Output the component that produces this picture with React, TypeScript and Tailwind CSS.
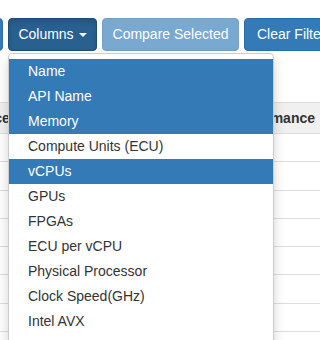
import React from 'react'

const items = [
  { label: 'Name', on: true },
  { label: 'API Name', on: true },
  { label: 'Memory', on: true },
  { label: 'Compute Units (ECU)', on: false },
  { label: 'vCPUs', on: true },
  { label: 'GPUs', on: false },
  { label: 'FPGAs', on: false },
  { label: 'ECU per vCPU', on: false },
  { label: 'Physical Processor', on: false },
  { label: 'Clock Speed(GHz)', on: false },
  { label: 'Intel AVX', on: false },
]

export default function App() {
  return (
    <div
      className="relative w-[320px] h-[340px] overflow-hidden bg-white text-[#333] text-[14px]"
      style={{ fontFamily: '"Liberation Sans", Arial, sans-serif' }}
    >
      {/* Toolbar */}
      <div className="flex gap-[5px] pt-[18px] whitespace-nowrap">
        <div className="-ml-[37px] w-[40px] h-[33px] rounded-[4px] bg-[#337ab7] border border-[#2e6da4] shrink-0" />
        <button className="shrink-0 h-[33px] w-[89px] flex items-center justify-center gap-[5px] rounded-[4px] bg-[#286090] border border-[#204d74] text-white shadow-[inset_0_3px_5px_rgba(0,0,0,0.125)]">
          Columns
          <span className="inline-block w-0 h-0 border-x-[4px] border-x-transparent border-t-[4px] border-t-white mt-[1px]" />
        </button>
        <button className="shrink-0 h-[33px] w-[137px] rounded-[4px] bg-[#337ab7] border border-[#2e6da4] text-white opacity-65">
          Compare Selected
        </button>
        <button className="shrink-0 h-[33px] pl-[12px] pr-[12px] rounded-[4px] bg-[#337ab7] border border-[#2e6da4] text-white">
          Clear Filters
        </button>
      </div>

      {/* Table behind the menu */}
      <div className="mt-[51px] border-t border-[#ddd]">
        <div className="h-[31px] bg-[#f0f0f0] border-b border-[#ddd] flex items-center justify-between font-bold text-[#333]">
          <span className="-ml-[47px]">Instance</span>
          <span className="mr-[5px]">Performance</span>
        </div>
        {Array.from({ length: 8 }).map((_, i) => (
          <div key={i} className="h-[28.3px] border-b border-[#ddd]" />
        ))}
      </div>

      {/* Dropdown menu */}
      <ul className="absolute left-[8px] top-[53px] w-[266px] pt-[5px] pb-[30px] bg-white border border-[#ccc] rounded-[4px] shadow-[0_6px_12px_rgba(0,0,0,0.175)]">
        {items.map((it) => (
          <li
            key={it.label}
            className={`h-[25px] leading-[25px] pl-[19px] ${it.on ? 'bg-[#337ab7] text-white' : 'text-[#333]'}`}
          >
            {it.label}
          </li>
        ))}
      </ul>
    </div>
  )
}
